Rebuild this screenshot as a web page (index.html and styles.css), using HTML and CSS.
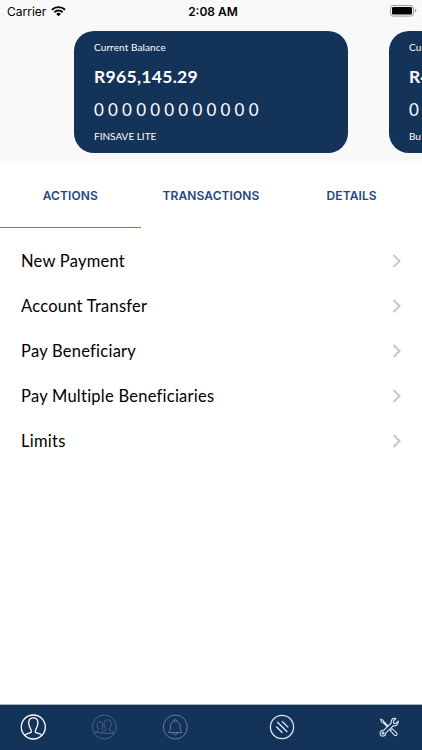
FILE: index.html
```html
<!DOCTYPE html>
<html lang="en">
<head>
  <meta charset="UTF-8">
  <meta name="viewport" content="width=device-width, initial-scale=1">
  <title>Accounts</title>
  <link rel="stylesheet" href="styles.css">
</head>
<body>
  <div class="app">
    <header class="header">
      <div class="status-bar">
        <div class="carrier">
          <span>Carrier</span>
          <svg class="wifi" viewBox="0 0 16 12">
            <path d="M1 4.7a10 10 0 0 1 14 0M3.6 7.3a6.3 6.3 0 0 1 8.8 0" fill="none" stroke="#000" stroke-width="2"/>
            <path d="M5.5 9.1a3.6 3.6 0 0 1 5 0L8 11.6z"/>
          </svg>
        </div>
        <div class="clock">2:08 AM</div>
        <svg class="battery" viewBox="0 0 27 12">
          <rect x="0.5" y="0.5" width="23" height="10.6" rx="2.6" fill="none" stroke="#999"/>
          <rect x="2" y="2" width="20" height="7.6" rx="1.3"/>
          <path d="M25 4v3.6q1.4-.5 1.4-1.8T25 4z" fill="#999"/>
        </svg>
      </div>

      <div class="cards">
        <div class="card">
          <p class="card-label">Current Balance</p>
          <p class="balance">R965,145.29</p>
          <p class="number">000000000000</p>
          <p class="card-name">FINSAVE LITE</p>
        </div>
        <div class="card">
          <p class="card-label">Cu</p>
          <p class="balance">R4</p>
          <p class="number">0</p>
          <p class="card-name">Bu</p>
        </div>
      </div>
    </header>

    <nav class="tabs">
      <a class="tab active">ACTIONS</a>
      <a class="tab">TRANSACTIONS</a>
      <a class="tab">DETAILS</a>
    </nav>

    <ul class="actions">
      <li>New Payment<svg class="chevron" viewBox="0 0 10 14"><path d="M1.5 1l6 6-6 6"/></svg></li>
      <li>Account Transfer<svg class="chevron" viewBox="0 0 10 14"><path d="M1.5 1l6 6-6 6"/></svg></li>
      <li>Pay Beneficiary<svg class="chevron" viewBox="0 0 10 14"><path d="M1.5 1l6 6-6 6"/></svg></li>
      <li>Pay Multiple Beneficiaries<svg class="chevron" viewBox="0 0 10 14"><path d="M1.5 1l6 6-6 6"/></svg></li>
      <li>Limits<svg class="chevron" viewBox="0 0 10 14"><path d="M1.5 1l6 6-6 6"/></svg></li>
    </ul>

    <footer class="tab-bar">
      <svg class="icon selected" viewBox="0 0 28 28">
        <circle cx="14.3" cy="14" r="12"/>
        <path d="M6 22.4c1.2-1.8 3.4-2 5-2.5 1.5-.5 1.6-1.6 1-3-1.4-2.5-2.3-4.2-2.3-7 0-3.3 1.8-5 4.6-5s4.6 1.7 4.6 5c0 2.8-.9 4.5-2.3 7-.6 1.4-.5 2.5 1 3 1.6.5 3.8.7 5 2.5"/>
      </svg>
      <svg class="icon dim" viewBox="0 0 28 28">
        <circle cx="14.3" cy="14" r="12"/>
        <path d="M10.5 20.2h14M11.5 20c.5-2.200 3.800-1.700 4.300-3.200.3-1.300-1.800-2.800-1.800-6 0-2.600 1.400-4 3.600-4s3.600 1.400 3.600 4c0 3.200-2.100 4.700-1.800 6 .4 1.500 3.800 1 4.600 3.200"/>
        <path d="M4.500 19.500h6M5 19.300c.5-1.800 3.300-1.200 3.600-2.500.2-1.200-1.500-2.300-1.500-4.800 0-2.100 1.200-3.300 2.900-3.300s2.900 1.200 2.900 3.300c0 2.500-1.400 3.600-1.200 4.800"/>
      </svg>
      <svg class="icon dim bell" viewBox="0 0 28 28">
        <circle cx="14.3" cy="14" r="12"/>
        <path d="M7.5 19.500c1.600-1 2-2.500 2-5.800 0-3.700 1.800-5.700 4.800-5.700s4.800 2 4.800 5.700c0 3.300.4 4.800 2 5.800zM13 7.800c0-2 2.600-2 2.600 0M12.300 19.700c0 2.700 4 2.700 4 0"/>
      </svg>
      <svg class="icon" viewBox="0 0 28 28">
        <circle cx="14" cy="14" r="11.6"/>
        <path d="M14 8.2l6.2 6.200M9.300 9l10 10M8.200 13.500l6.200 6.200"/>
      </svg>
      <svg class="icon tools" viewBox="0 0 28 28">
        <path d="M5.400 6.100l2.800 1.200.8 1.700 4.200 4.200M5.400 6.100l1.200 2.800 1.600.8 4.200 4.200M15.300 17.500l1.800-1.800 4.500 4.200c1.300 1.600-.7 3.500-2.200 2.200z"/>
        <path d="M8.600 17.300l7.600-7.300c-.8-3.200 1.900-5.400 4.700-4.300l-2.500 2.500.4 2 2 .4 2.300-2.400c.7 3.100-1.800 5.200-4.700 4.500l-7.700 7.400c.4 3.400-4.900 4.200-5.600 1-.5-2.300 1.400-4.200 3.500-3.800z"/>
        <circle cx="8" cy="20" r="1"/>
      </svg>
    </footer>
  </div>
</body>
</html>
```
FILE: styles.css
```css
* {
  box-sizing: border-box;
}

body {
  margin: 0;
  background: #fff;
  color: #000;
  font-family: Lato, "Liberation Sans", sans-serif;
}

.app {
  display: flex;
  flex-direction: column;
  width: 422px;
  height: 750px;
  overflow: hidden;
}

.header {
  height: 163px;
  background: #f9f9f9;
}

.status-bar {
  display: grid;
  grid-template-columns: 1fr 60px 1fr;
  align-items: center;
  height: 22px;
  margin-bottom: 9px;
  padding: 0 5px 0 7px;
  font-family: Inter, sans-serif;
  font-size: 12px;
}

.carrier {
  display: flex;
  align-items: center;
  gap: 5px;
}

.wifi {
  width: 15px;
  height: 12px;
}

.clock {
  padding-left: 2px;
  font-weight: 600;
  text-align: center;
  white-space: nowrap;
}

.battery {
  justify-self: end;
  width: 27px;
  height: 12px;
}

.cards {
  display: flex;
  gap: 41px;
  padding-left: 74px;
}

.card {
  flex: 0 0 274px;
  height: 122px;
  padding: 10px 20px;
  border-radius: 20px;
  background: #143359;
  color: #fff;
}

.card p {
  margin: 0;
  white-space: nowrap;
}

.card .card-label {
  font-size: 10px;
  line-height: 13px;
  letter-spacing: 0.1px;
}

.card .balance {
  margin-top: 12px;
  font-size: 17.5px;
  font-weight: bold;
  line-height: 22px;
  letter-spacing: 0.3px;
}

.card .number {
  margin-top: 12px;
  font-size: 17px;
  line-height: 20px;
  letter-spacing: 4.2px;
}

.card .card-name {
  margin-top: 10px;
  font-size: 10px;
  line-height: 13px;
}

.tabs {
  display: grid;
  grid-template-columns: repeat(3, 1fr);
  height: 65px;
}

.tab {
  padding-top: 2px;
  border-bottom: 1px solid transparent;
  color: #24477f;
  font-family: Inter, sans-serif;
  font-size: 12px;
  font-weight: 600;
  line-height: 62px;
  letter-spacing: 0.1px;
  text-align: center;
}

.tab.active {
  border-color: #5d7c9b;
}

.actions {
  flex: 1;
  margin: 0;
  padding: 11px 20px 0 21px;
  list-style: none;
}

.actions li {
  display: flex;
  align-items: center;
  justify-content: space-between;
  height: 44.8px;
  font-size: 16.5px;
  letter-spacing: 0.25px;
}

.chevron {
  width: 10px;
  height: 14px;
  fill: none;
  stroke: #c7c7cc;
  stroke-width: 2;
}

.tab-bar {
  display: grid;
  grid-template-columns: 71px 71px 107px 107px 1fr;
  align-items: center;
  height: 46px;
  padding: 0 0 2px 19px;
  border-top: 1px solid #aab5c3;
  background: #143359;
}

.icon {
  width: 28px;
  height: 28px;
  fill: none;
  stroke: #dce6f5;
  stroke-width: 1.3;
}

.icon.selected {
  stroke: #fff;
}

.icon.dim {
  stroke: #45638b;
  stroke-width: 1;
}

.icon.bell {
  stroke: #5f7ca5;
}

.icon.tools {
  stroke-width: 1.1;
}
```
